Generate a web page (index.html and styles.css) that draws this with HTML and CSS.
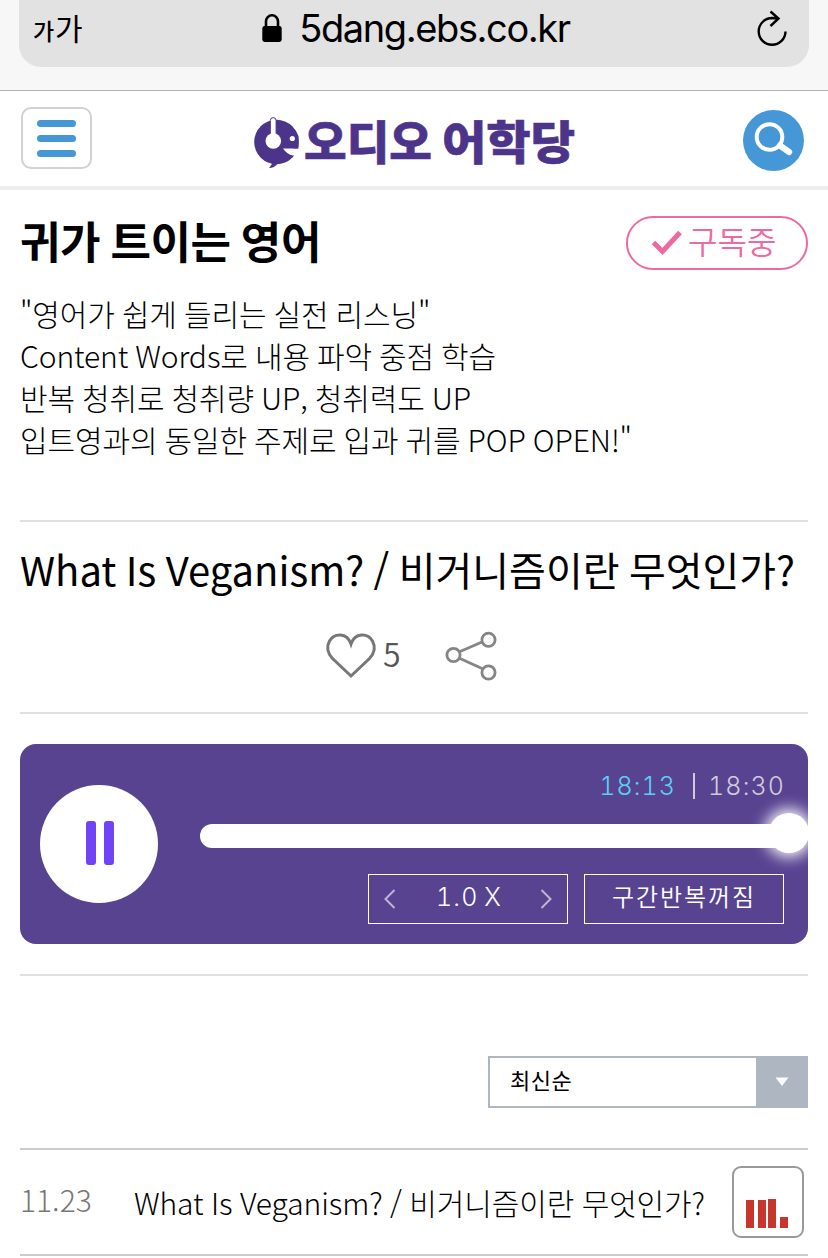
FILE: index.html
```html
<!DOCTYPE html>
<html lang="ko">
<head>
<meta charset="utf-8">
<title>오디오 어학당</title>
<link rel="stylesheet" href="styles.css">
</head>
<body>
<div class="browser">
  <div class="address">
    <div class="textsize"><span class="small">가</span><span class="large">가</span></div>
    <div class="url">
      <svg class="lock" width="20" height="28" viewBox="0 0 20 28"><path d="M4 14V7.500a6 6.300 0 0 1 12 0V14" fill="none" stroke="#000" stroke-width="2.600"/><rect x="0.300" y="12" width="19.400" height="16" rx="2.400"/></svg>
      <span class="domain">5dang.ebs.co.kr</span>
    </div>
    <svg class="reload" width="32" height="38" viewBox="0 0 32 38"><path d="M22 9.200L16 9A13.400 13.400 0 1 0 29.500 22.500M14.500 2.500l8 7-8 7.500" fill="none" stroke="#000" stroke-width="2.400"/></svg>
  </div>
</div>
<header class="header">
  <button class="menu" aria-label="메뉴"><span></span><span></span><span></span></button>
  <svg class="logo" width="322" height="60" viewBox="253 110 322 60">
    <circle cx="276.500" cy="142" r="22.300" fill="#4d348b"/>
    <path d="M269 160l3 4-3 4q6 0 9-5z" fill="#4d348b"/>
    <path d="M283 148.500h18v7h-8q-6-1-10-7z" fill="#fff"/>
    <path d="M295 130l3.500 6v12.500h-5z" fill="#4d348b"/>
    <path d="M270.300 139v-18.500a2.900 2.900 0 0 1 5.800 0v18.500z" fill="#fff" stroke="#4d348b" stroke-width="1"/>
    <circle cx="273.300" cy="141" r="7.800" fill="#fff"/>
    <circle cx="292.300" cy="138.500" r="2.600" fill="#fff"/>
    <text class="logo-text" x="304" y="159" textLength="128" lengthAdjust="spacingAndGlyphs">오디오</text>
    <text class="logo-text" x="442" y="159" textLength="133" lengthAdjust="spacingAndGlyphs">어학당</text>
  </svg>
  <button class="search" aria-label="검색"><svg width="61" height="61" viewBox="0 0 61 61"><circle cx="26.500" cy="27" r="12.800" fill="none" stroke="#fff" stroke-width="4"/><path d="M37 35.500l9 6.500" stroke="#fff" stroke-width="6.400" stroke-linecap="round"/></svg></button>
</header>
<main class="main">
  <section class="program">
    <div class="program-head">
      <h1 class="program-title">귀가 트이는 영어</h1>
      <button class="subscribe"><svg width="32" height="26" viewBox="0 0 32 26"><path d="M2.500 12.500l9 9L29 2.500" fill="none" stroke="#ee69a3" stroke-width="5"/></svg><span>구독중</span></button>
    </div>
    <p class="program-text">"영어가 쉽게 들리는 실전 리스닝"<br>Content Words로 내용 파악 중점 학습<br>반복 청취로 청취량 UP, 청취력도 UP<br>입트영과의 동일한 주제로 입과 귀를 POP OPEN!"</p>
  </section>
  <section class="episode">
    <h2 class="episode-title">What Is Veganism? / 비거니즘이란 무엇인가?</h2>
    <div class="actions">
      <svg width="50" height="46" viewBox="0 0 50 46"><path d="M25 44L6.500 26.500C1.500 21 0 15.500 3.500 9 8 1 21 0 25 12 29 0 42 1 46.500 9 50 15.500 48.500 21 43.500 26.500z" fill="none" stroke="#777" stroke-width="3"/></svg>
      <span class="likes">5</span>
      <svg class="share" width="52" height="50" viewBox="0 0 52 50"><g fill="none" stroke="#858585" stroke-width="2.800"><path d="M14 21l23-10M14 27l23 10.500"/><circle cx="8.500" cy="24" r="6.600"/><circle cx="43.500" cy="8.800" r="6.600"/><circle cx="43.500" cy="41.500" r="6.600"/></g></svg>
    </div>
  </section>
  <section class="player">
    <button class="pause" aria-label="일시정지"><span></span><span></span></button>
    <div class="controls">
      <div class="time"><span class="now">18:13</span><i></i><span class="total">18:30</span></div>
      <div class="track"><span class="thumb"></span></div>
      <div class="options">
        <div class="speed">
          <svg width="12" height="20" viewBox="0 0 12 20"><path d="M10.500 1L1.500 10l9 9" fill="none" stroke="#bdb5d2" stroke-width="2"/></svg>
          <span>1.0 X</span>
          <svg width="12" height="20" viewBox="0 0 12 20"><path d="M1.500 1l9 9-9 9" fill="none" stroke="#bdb5d2" stroke-width="2"/></svg>
        </div>
        <div class="repeat">구간반복꺼짐</div>
      </div>
    </div>
  </section>
  <section class="list">
    <div class="sort"><span>최신순</span><i><svg width="14" height="10" viewBox="0 0 14 10"><path d="M.5.5h13L7 9z" fill="#fff"/></svg></i></div>
    <div class="row">
      <span class="date">11.23</span>
      <span class="row-title">What Is Veganism? / 비거니즘이란 무엇인가?</span>
      <span class="chart"><svg width="42" height="30" viewBox="0 0 42 30" fill="#c8352d"><path d="M0 1h8v28H0zM12 1h8v28h-8zM22 0h8v29h-8zM34 18h8v11h-8z"/></svg></span>
    </div>
  </section>
</main>
</body>
</html>
```
FILE: styles.css
```css
* { box-sizing: border-box; }
body {
  margin: 0;
  height: 1258px;
  overflow: hidden;
  background: #fff;
  color: #000;
  font-family: "Noto Sans CJK KR", sans-serif;
}
button { padding: 0; margin: 0; background: none; font: inherit; }
h1, h2, p { margin: 0; white-space: nowrap; }
svg { display: block; flex: none; overflow: visible; }

.browser { height: 91px; padding: 0 19px; background: #f7f7f7; border-bottom: 1px solid #b0b0b0; }
.address {
  height: 67px;
  display: flex;
  align-items: center;
  justify-content: space-between;
  padding: 0 21px 11px 14px;
  background: #e2e2e2;
  border-radius: 0 0 22px 22px;
}
.textsize { width: 60px; display: flex; align-items: baseline; line-height: 54px; white-space: nowrap; }
.textsize .small { font-size: 23px; width: 22px; font-weight: 500; }
.textsize .large { font-size: 30px; }
.url { display: flex; align-items: center; gap: 17px; margin-left: -17px; }
.domain { font: 38px/56px Inter, sans-serif; letter-spacing: -1.4px; }

.header {
  height: 99px;
  display: flex;
  align-items: center;
  justify-content: space-between;
  padding: 0 24px 0 21px;
  border-bottom: 4px solid #eee;
}
.menu {
  width: 71px;
  height: 62px;
  margin-top: -1px;
  display: flex;
  flex-direction: column;
  align-items: center;
  justify-content: center;
  gap: 8px;
  border: 2px solid #d2d2d2;
  border-radius: 10px;
}
.menu span { width: 39px; height: 7px; border-radius: 4px; background: #4697d5; }
.logo { margin: 3px 0 0 -8px; }
.logo-text { font-size: 46px; font-weight: 900; fill: #4d348b; stroke: #4d348b; stroke-width: 0.6px; }
.search { width: 61px; height: 61px; margin-top: 4px; border: 0; border-radius: 50%; background: #4697d5; }

.main { padding: 0 20px; }
.program { height: 332px; padding-top: 26px; border-bottom: 2px solid #e0e0e0; }
.program-head { height: 54px; display: flex; justify-content: space-between; }
.program-title { margin-top: -2px; font-size: 44px; line-height: 52px; font-weight: 700; letter-spacing: -0.4px; word-spacing: -1.7px; }
.subscribe {
  width: 182px;
  height: 54px;
  display: flex;
  align-items: center;
  padding: 0 0 0 23px;
  gap: 5px;
  border: 2px solid #ee69a3;
  border-radius: 27px;
  color: #ee69a3;
  font-size: 32px;
  font-weight: 350;
  line-height: 46px;
}
.subscribe span { margin-top: -6px; white-space: nowrap; }
.program-text { padding-top: 22px; font-size: 30px; line-height: 42px; font-weight: 300; letter-spacing: -0.12px; word-spacing: -1.2px; }

.episode { height: 192px; padding-top: 21px; border-bottom: 2px solid #e0e0e0; }
.episode-title { font-size: 40px; line-height: 52px; font-weight: 400; word-spacing: -1.8px; }
.actions { display: flex; align-items: center; height: 50px; margin: 35px 0 0 306px; }
.likes { width: 69px; margin-top: -4px; padding-left: 7px; font-size: 32px; line-height: 50px; color: #555; font-weight: 350; }
.share { margin-top: 2px; }

.player {
  height: 200px;
  display: flex;
  margin-top: 30px;
  background: #584391;
  border-radius: 16px;
  overflow: hidden;
  color: #fff;
}
.pause {
  flex: none;
  width: 118px;
  height: 118px;
  margin: 41px 42px 0 20px;
  display: flex;
  align-items: center;
  justify-content: center;
  gap: 8px;
  padding: 0 0 2px 2px;
  border: 0;
  border-radius: 50%;
  background: #fff;
}
.pause span { width: 10px; height: 44px; border-radius: 3px; background: #7043f5; }
.controls { flex: 1; }
.time {
  height: 80px;
  display: flex;
  align-items: center;
  justify-content: flex-end;
  padding: 3px 23px 0 0;
  font: 300 25px/30px Inter, sans-serif;
  font-variant-numeric: tabular-nums;
  letter-spacing: 1.1px;
}
.time i { width: 2px; height: 26px; margin: 0 13px 0 17px; background: #d0cbdc; }
.now { color: #5ad0f5; }
.total { color: #d0cbdc; }
.track { height: 24px; display: flex; justify-content: flex-end; align-items: center; border-radius: 12px; background: #fff; }
.thumb { width: 40px; height: 40px; margin: -6px -1px 0 0; border-radius: 50%; background: #fff; box-shadow: 0 0 15px 4px #fff; }
.options { display: flex; justify-content: flex-end; gap: 16px; padding: 26px 24px 0 0; }
.speed, .repeat { width: 200px; height: 50px; border: 1px solid #fff; font-size: 24px; line-height: 42px; font-weight: 300; }
.speed { display: flex; align-items: center; justify-content: space-between; padding: 0 15px; }
.speed span { margin: -4px 0 0 2px; font-family: Inter, sans-serif; font-size: 25px; letter-spacing: 1.1px; font-variant-numeric: tabular-nums; word-spacing: -2px; }
.repeat { text-align: center; letter-spacing: 1.9px; font-weight: 350; }

.list { margin-top: 30px; padding-top: 80px; border-top: 2px solid #e0e0e0; }
.sort {
  width: 320px;
  height: 52px;
  display: flex;
  justify-content: space-between;
  margin-left: auto;
  padding-left: 20px;
  border: 2px solid #adb6c1;
  font-size: 22px;
  line-height: 43px;
  letter-spacing: 0.5px;
}
.sort i { width: 50px; padding-left: 2px; display: flex; align-items: center; justify-content: center; background: #adb6c1; }
.row {
  height: 108px;
  display: flex;
  align-items: center;
  margin-top: 40px;
  border-top: 2px solid #ccc;
  border-bottom: 2px solid #ccc;
  font-size: 30px;
  font-weight: 300;
  white-space: nowrap;
}
.date { width: 114px; color: #777; margin-top: -6px; }
.row-title { flex: 1; letter-spacing: -0.12px; word-spacing: -0.8px; }
.chart {
  flex: none;
  width: 72px;
  height: 72px;
  margin-right: 4px;
  padding: 31px 0 0 12px;
  border: 2px solid #999;
  border-radius: 9px;
}
```
